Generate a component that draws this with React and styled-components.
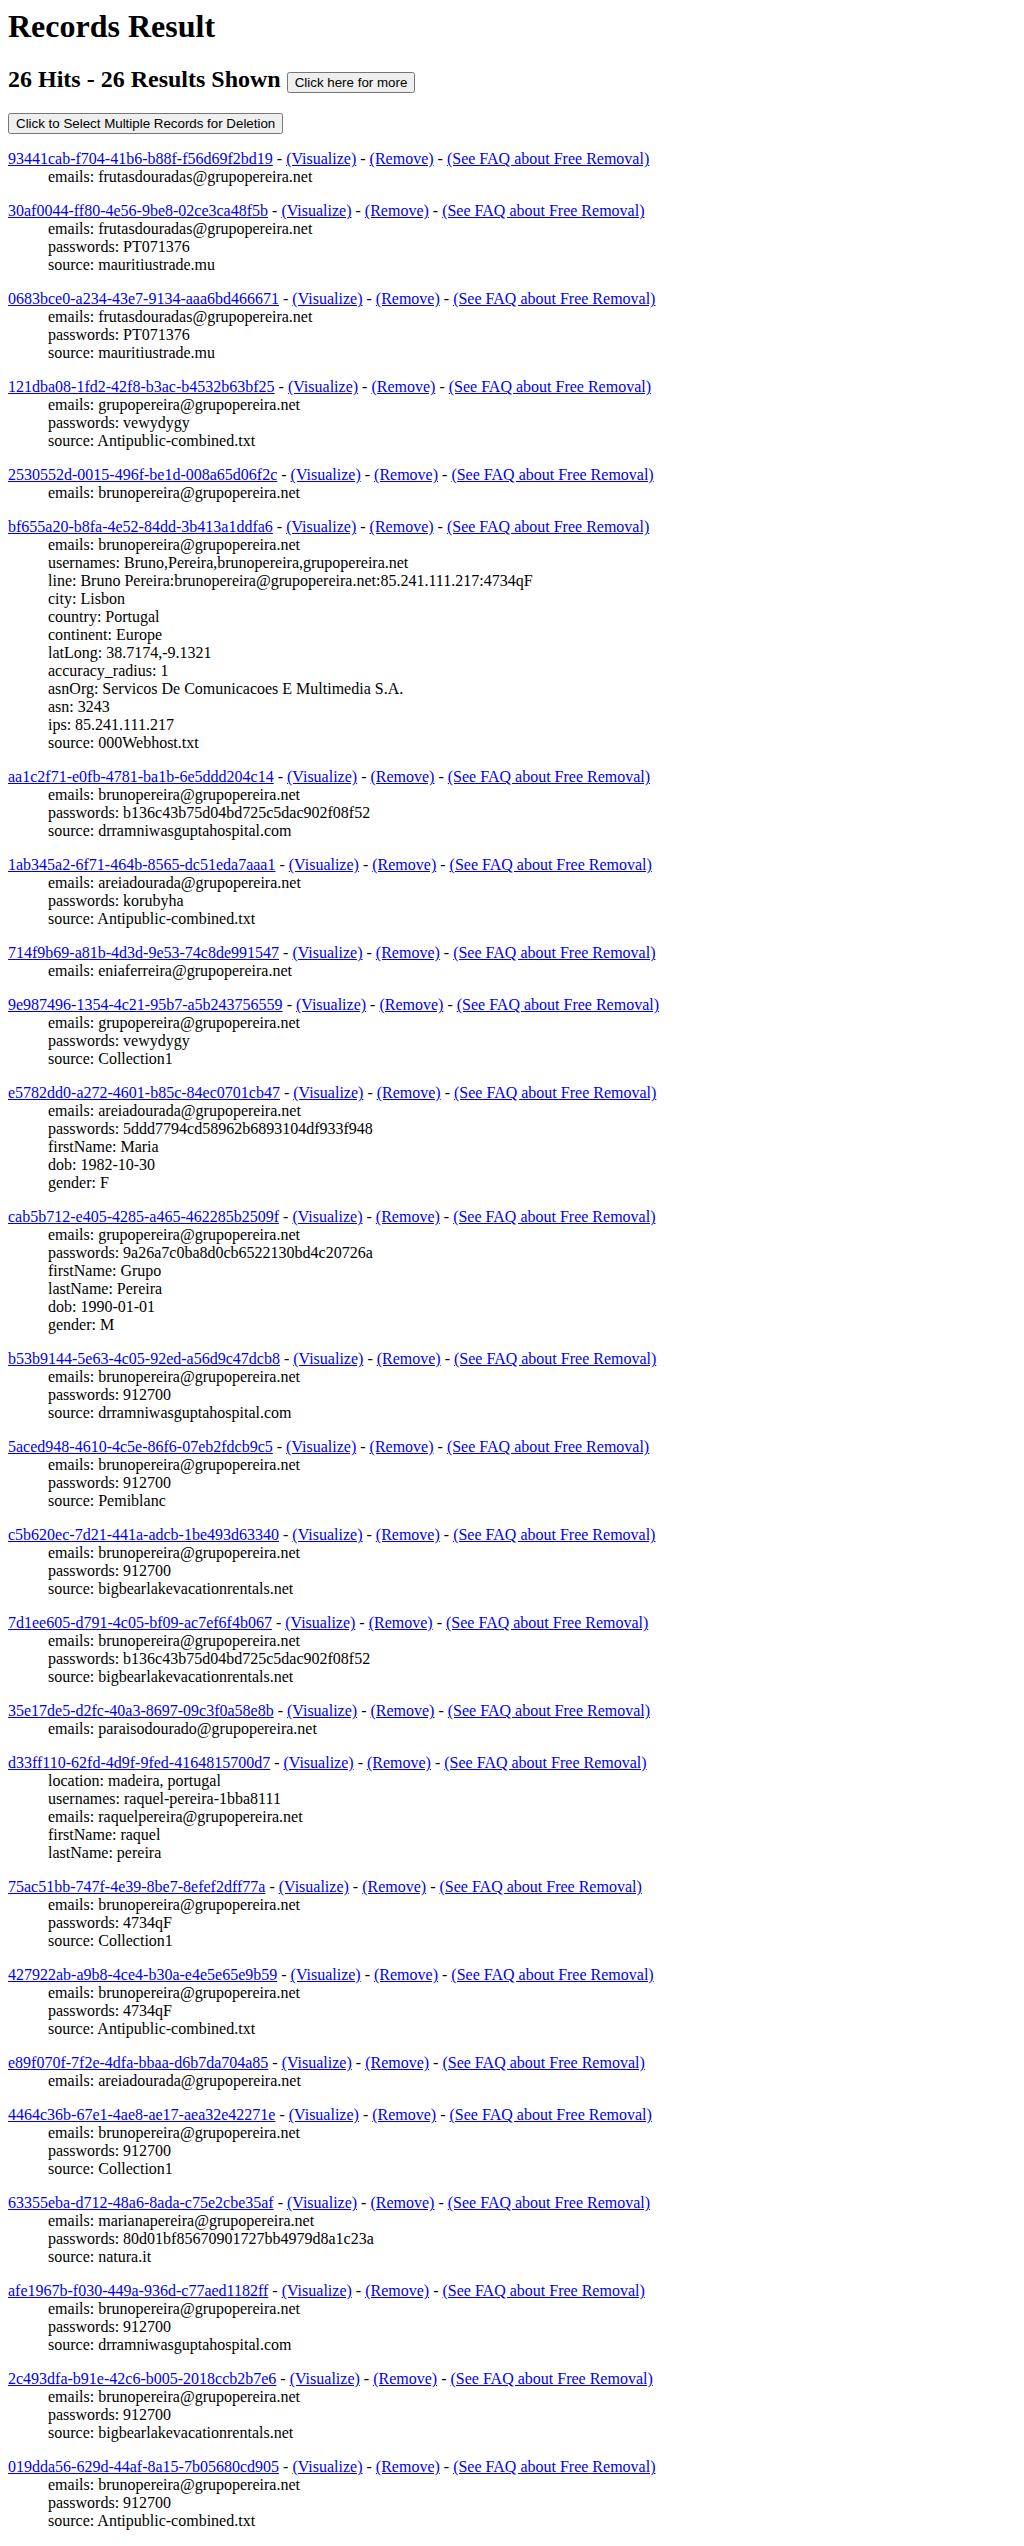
import React from "react";
import styled, { createGlobalStyle } from "styled-components";

const GlobalStyle = createGlobalStyle`
  html, body {
    background: #ffffff;
  }
  body {
    margin: 8px;
    font-family: "Liberation Serif", "Times New Roman", serif;
    font-size: 16px;
    color: #000000;
  }
`;

const Page = styled.main`
  display: block;
`;

const Title = styled.h1`
  font-size: 2em;
  font-weight: bold;
  margin: 0 0 0.67em;
`;

const Hits = styled.h2`
  font-size: 1.5em;
  font-weight: bold;
  margin: 0.83em 0;
`;

const NativeButton = styled.button`
  font: 13.3333px "Liberation Sans", Arial, sans-serif;
  color: #000000;
  cursor: pointer;
`;

const Toolbar = styled.div`
  display: flex;
  align-items: flex-start;
`;

const Record = styled.dl`
  margin: 1em 0;
`;

const Head = styled.dt`
  display: block;
`;

const Field = styled.dd`
  margin-left: 40px;
`;

const Link = styled.a`
  color: #0000ee;
  text-decoration: underline;
`;

const records = [
  ["93441cab-f704-41b6-b88f-f56d69f2bd19", ["emails: frutasdouradas@grupopereira.net"]],
  ["30af0044-ff80-4e56-9be8-02ce3ca48f5b", ["emails: frutasdouradas@grupopereira.net", "passwords: PT071376", "source: mauritiustrade.mu"]],
  ["0683bce0-a234-43e7-9134-aaa6bd466671", ["emails: frutasdouradas@grupopereira.net", "passwords: PT071376", "source: mauritiustrade.mu"]],
  ["121dba08-1fd2-42f8-b3ac-b4532b63bf25", ["emails: grupopereira@grupopereira.net", "passwords: vewydygy", "source: Antipublic-combined.txt"]],
  ["2530552d-0015-496f-be1d-008a65d06f2c", ["emails: brunopereira@grupopereira.net"]],
  ["bf655a20-b8fa-4e52-84dd-3b413a1ddfa6", [
    "emails: brunopereira@grupopereira.net",
    "usernames: Bruno,Pereira,brunopereira,grupopereira.net",
    "line: Bruno Pereira:brunopereira@grupopereira.net:85.241.111.217:4734qF",
    "city: Lisbon",
    "country: Portugal",
    "continent: Europe",
    "latLong: 38.7174,-9.1321",
    "accuracy_radius: 1",
    "asnOrg: Servicos De Comunicacoes E Multimedia S.A.",
    "asn: 3243",
    "ips: 85.241.111.217",
    "source: 000Webhost.txt",
  ]],
  ["aa1c2f71-e0fb-4781-ba1b-6e5ddd204c14", ["emails: brunopereira@grupopereira.net", "passwords: b136c43b75d04bd725c5dac902f08f52", "source: drramniwasguptahospital.com"]],
  ["1ab345a2-6f71-464b-8565-dc51eda7aaa1", ["emails: areiadourada@grupopereira.net", "passwords: korubyha", "source: Antipublic-combined.txt"]],
  ["714f9b69-a81b-4d3d-9e53-74c8de991547", ["emails: eniaferreira@grupopereira.net"]],
  ["9e987496-1354-4c21-95b7-a5b243756559", ["emails: grupopereira@grupopereira.net", "passwords: vewydygy", "source: Collection1"]],
  ["e5782dd0-a272-4601-b85c-84ec0701cb47", ["emails: areiadourada@grupopereira.net", "passwords: 5ddd7794cd58962b6893104df933f948", "firstName: Maria", "dob: 1982-10-30", "gender: F"]],
  ["cab5b712-e405-4285-a465-462285b2509f", ["emails: grupopereira@grupopereira.net", "passwords: 9a26a7c0ba8d0cb6522130bd4c20726a", "firstName: Grupo", "lastName: Pereira", "dob: 1990-01-01", "gender: M"]],
  ["b53b9144-5e63-4c05-92ed-a56d9c47dcb8", ["emails: brunopereira@grupopereira.net", "passwords: 912700", "source: drramniwasguptahospital.com"]],
  ["5aced948-4610-4c5e-86f6-07eb2fdcb9c5", ["emails: brunopereira@grupopereira.net", "passwords: 912700", "source: Pemiblanc"]],
  ["c5b620ec-7d21-441a-adcb-1be493d63340", ["emails: brunopereira@grupopereira.net", "passwords: 912700", "source: bigbearlakevacationrentals.net"]],
  ["7d1ee605-d791-4c05-bf09-ac7ef6f4b067", ["emails: brunopereira@grupopereira.net", "passwords: b136c43b75d04bd725c5dac902f08f52", "source: bigbearlakevacationrentals.net"]],
  ["35e17de5-d2fc-40a3-8697-09c3f0a58e8b", ["emails: paraisodourado@grupopereira.net"]],
  ["d33ff110-62fd-4d9f-9fed-4164815700d7", ["location: madeira, portugal", "usernames: raquel-pereira-1bba8111", "emails: raquelpereira@grupopereira.net", "firstName: raquel", "lastName: pereira"]],
  ["75ac51bb-747f-4e39-8be7-8efef2dff77a", ["emails: brunopereira@grupopereira.net", "passwords: 4734qF", "source: Collection1"]],
  ["427922ab-a9b8-4ce4-b30a-e4e5e65e9b59", ["emails: brunopereira@grupopereira.net", "passwords: 4734qF", "source: Antipublic-combined.txt"]],
  ["e89f070f-7f2e-4dfa-bbaa-d6b7da704a85", ["emails: areiadourada@grupopereira.net"]],
  ["4464c36b-67e1-4ae8-ae17-aea32e42271e", ["emails: brunopereira@grupopereira.net", "passwords: 912700", "source: Collection1"]],
  ["63355eba-d712-48a6-8ada-c75e2cbe35af", ["emails: marianapereira@grupopereira.net", "passwords: 80d01bf85670901727bb4979d8a1c23a", "source: natura.it"]],
  ["afe1967b-f030-449a-936d-c77aed1182ff", ["emails: brunopereira@grupopereira.net", "passwords: 912700", "source: drramniwasguptahospital.com"]],
  ["2c493dfa-b91e-42c6-b005-2018ccb2b7e6", ["emails: brunopereira@grupopereira.net", "passwords: 912700", "source: bigbearlakevacationrentals.net"]],
  ["019dda56-629d-44af-8a15-7b05680cd905", ["emails: brunopereira@grupopereira.net", "passwords: 912700", "source: Antipublic-combined.txt"]],
];

function RecordEntry({ id, fields }) {
  return (
    <Record>
      <Head>
        <Link href="#">{id}</Link> - <Link href="#">(Visualize)</Link> -{" "}
        <Link href="#">(Remove)</Link> -{" "}
        <Link href="#">(See FAQ about Free Removal)</Link>
      </Head>
      {fields.map((f, i) => (
        <Field key={i}>{f}</Field>
      ))}
    </Record>
  );
}

export default function App() {
  return (
    <Page>
      <GlobalStyle />
      <Title>Records Result</Title>
      <Hits>
        26 Hits - 26 Results Shown <NativeButton type="button">Click here for more</NativeButton>
      </Hits>
      <Toolbar>
        <NativeButton type="button">Click to Select Multiple Records for Deletion</NativeButton>
      </Toolbar>
      {records.map(([id, fields]) => (
        <RecordEntry key={id} id={id} fields={fields} />
      ))}
    </Page>
  );
}
